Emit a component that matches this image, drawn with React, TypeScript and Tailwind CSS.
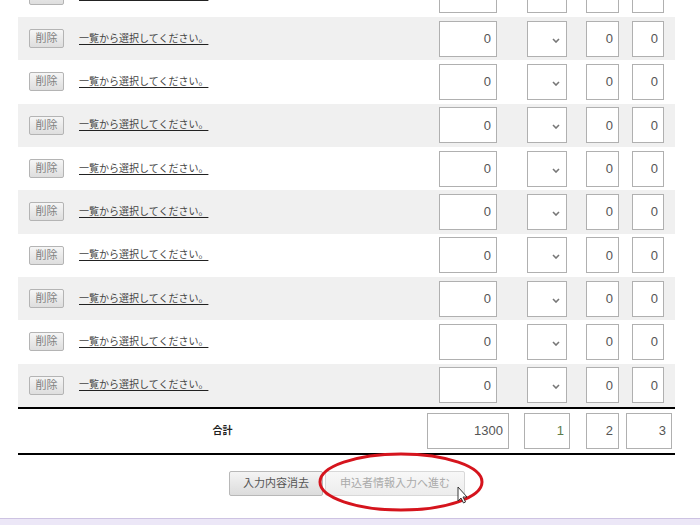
import React from "react";

const jp = { fontFamily: '"Liberation Sans", "Noto Sans CJK JP", sans-serif' };

function Chevron() {
  return (
    <svg width="8" height="5" viewBox="0 0 8 5" className="absolute right-[6px] top-[16px]">
      <path d="M1 1 L4 4 L7 1" fill="none" stroke="#777" strokeWidth="1.6" />
    </svg>
  );
}

function Row({ gray }: { gray: boolean }) {
  return (
    <div className={gray ? "flex items-center h-[43.33px] bg-[#f0f0f0]" : "flex items-center h-[43.33px] bg-white"}>
      <div className="ml-[11px] w-[35px] h-[19px] flex items-center justify-center border border-[#b4b4b4] rounded-[2px] bg-gradient-to-b from-[#f6f6f6] to-[#dedede] text-[11px] text-[#808080] leading-none">
        削除
      </div>
      <div className="ml-[15px] text-[10px] leading-none text-[#444] underline underline-offset-[2px] decoration-[#222]">
        一覧から選択してください。
      </div>
      <div className="flex-1" />
      <div className="w-[58px] h-[36px] border border-[#b0b0b0] bg-white flex items-center justify-end pr-[5px] text-[13px] text-[#555]">0</div>
      <div className="relative ml-[30px] w-[40px] h-[36px] border border-[#b0b0b0] bg-white">
        <Chevron />
      </div>
      <div className="ml-[19px] w-[33px] h-[36px] border border-[#b0b0b0] bg-white flex items-center justify-end pr-[5px] text-[13px] text-[#555]">0</div>
      <div className="ml-[13px] mr-[11px] w-[32px] h-[36px] border border-[#b0b0b0] bg-white flex items-center justify-end pr-[5px] text-[13px] text-[#555]">0</div>
    </div>
  );
}

export default function App() {
  const rows = [false, true, false, true, false, true, false, true, false, true];
  return (
    <div className="relative w-[700px] h-[525px] overflow-hidden bg-white" style={jp}>
      <div className="flex flex-col h-full">
        <div className="mx-[18px] w-[657px] mt-[-26.33px] flex flex-col">
          {rows.map((g, i) => (
            <Row key={i} gray={g} />
          ))}
          <div className="h-[2px] bg-black" />
          <div className="flex items-center h-[44px]">
            <div className="w-[409px] text-center text-[10px] font-bold text-[#222] leading-none">合計</div>
            <div className="w-[82px] h-[36px] border border-[#b0b0b0] bg-white flex items-center justify-end pr-[5px] text-[13px] text-[#555]">1300</div>
            <div className="ml-[15px] w-[46px] h-[36px] border border-[#b0b0b0] bg-white flex items-center justify-end pr-[5px] text-[13px] text-[#5b7b4b]">1</div>
            <div className="ml-[16px] w-[33px] h-[36px] border border-[#b0b0b0] bg-white flex items-center justify-end pr-[5px] text-[13px] text-[#555]">2</div>
            <div className="ml-[7px] w-[46px] h-[36px] border border-[#b0b0b0] bg-white flex items-center justify-end pr-[5px] text-[13px] text-[#555]">3</div>
          </div>
          <div className="h-[2px] bg-black" />
        </div>
        <div className="mt-[16px] flex justify-center gap-[2px] pl-[-4px]">
          <div className="ml-[-6px] w-[94px] h-[25px] border border-[#b8b8b8] rounded-[2px] bg-gradient-to-b from-[#f4f4f4] to-[#dcdcdc] flex items-center justify-center text-[11px] text-[#555] leading-none">
            入力内容消去
          </div>
          <div className="w-[140px] h-[25px] border border-[#d8d8d8] rounded-[2px] bg-gradient-to-b from-[#f8f8f8] to-[#ececec] flex items-center justify-center text-[11px] text-[#aaa] leading-none">
            申込者情報入力へ進む
          </div>
        </div>
        <div className="flex-1" />
        <div className="h-[7px] border-t border-[#cdc3e2] bg-[#ece7f7]" />
      </div>
      <svg className="absolute left-0 top-0 pointer-events-none" width="700" height="525" viewBox="0 0 700 525">
        <ellipse cx="401" cy="482" rx="81" ry="28" fill="none" stroke="#d5141d" strokeWidth="3" />
        <path d="M458 487 L458 501 L461 498 L463.5 503 L465.5 502 L463 497 L467 497 Z" fill="#fff" stroke="#222" strokeWidth="0.9" strokeLinejoin="round" />
      </svg>
    </div>
  );
}
